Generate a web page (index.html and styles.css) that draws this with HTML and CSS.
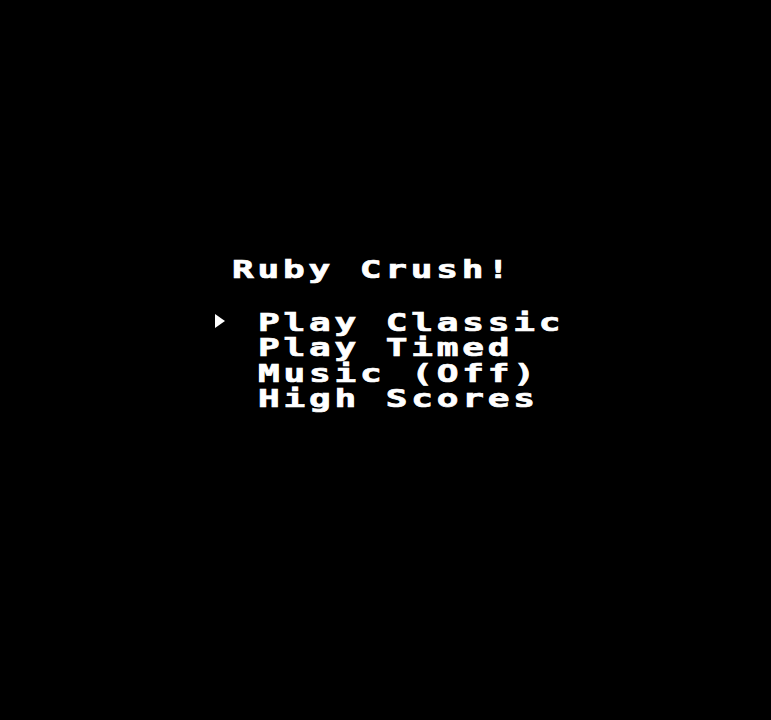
FILE: index.html
```html
<!DOCTYPE html>
<html>
<head>
<meta charset="utf-8">
<link rel="stylesheet" href="styles.css">
</head>
<body>
<div class="screen">
  <div class="title"><span class="px">Ruby Crush!</span></div>
  <ul class="menu">
    <li class="item selected"><span class="cursor"><svg width="10" height="14" viewBox="0 0 10 14"><path d="M0 0 L10 7 L0 14 Z" fill="#fff"/></svg></span><span class="px">Play Classic</span></li>
    <li class="item"><span class="cursor"></span><span class="px">Play Timed</span></li>
    <li class="item"><span class="cursor"></span><span class="px">Music (Off)</span></li>
    <li class="item"><span class="cursor"></span><span class="px">High Scores</span></li>
  </ul>
</div>
</body>
</html>
```
FILE: styles.css
```css
html, body {
  margin: 0;
  padding: 0;
  background: #000;
}
.screen {
  width: 771px;
  height: 720px;
  background: #000;
  color: #fff;
  font-family: "DejaVu Sans Mono", "Liberation Mono", monospace;
  font-weight: bold;
  font-size: 21px;
  line-height: 25.5px;
  padding-top: 258px;
  box-sizing: border-box;
  overflow: hidden;
}
.px {
  display: inline-block;
  white-space: pre;
  letter-spacing: 2.2px;
  transform: scale(1.72, 1.17);
  transform-origin: left center;
  -webkit-text-stroke: 0.6px #fff;
}
.title {
  padding-left: 232px;
  height: 25.5px;
}
.menu {
  list-style: none;
  margin: 27px 0 0 0;
  padding: 0 0 0 215px;
}
.item {
  display: flex;
  align-items: center;
  height: 25.5px;
}
.cursor {
  width: 43px;
  display: flex;
  align-items: center;
  height: 25.5px;
}
.cursor svg {
  display: block;
  margin-top: -4px;
}
```
